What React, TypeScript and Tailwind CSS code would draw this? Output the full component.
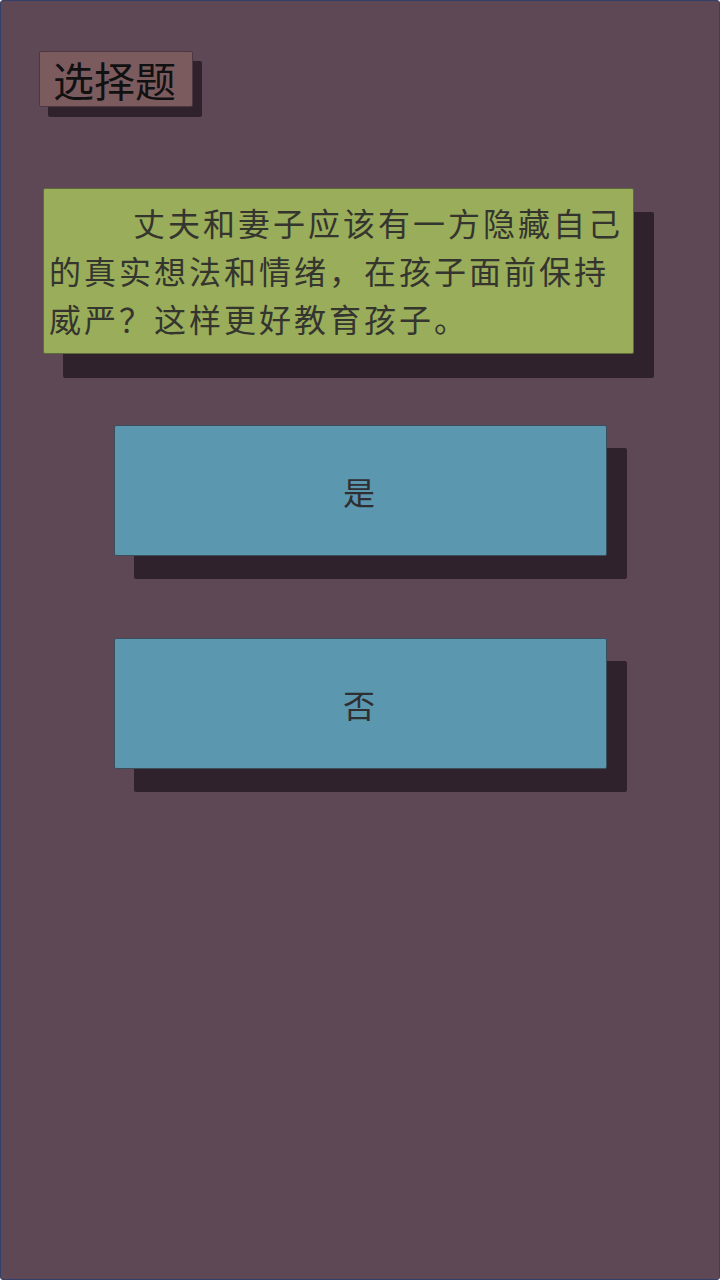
import React from "react";

const cjk = { fontFamily: '"Noto Sans CJK SC", "Noto Sans", sans-serif' };

function ChoiceButton({ label }: { label: string }) {
  return (
    <button
      className="ml-[113px] w-[493px] h-[131px] rounded-[2px] border border-[#3c4d5c] bg-[#5b97ae] shadow-[20px_23px_0_#30222c] text-[32px] text-[#2f2f33] flex items-center justify-center pr-[3px]"
      style={cjk}
    >
      {label}
    </button>
  );
}

export default function App() {
  return (
    <div className="w-[720px] h-[1280px] bg-[#5f4856] border border-[#34406a] rounded-[3px] overflow-hidden" style={cjk}>
      {/* heading tag */}
      <div className="pt-[50px] pl-[38px]">
        <div className="w-[154px] h-[56px] rounded-[2px] border border-[#4d3840] bg-[#7c5b5f] shadow-[9px_10px_0_#30222c] pl-[13px] flex items-center">
          <span className="text-[41px] leading-none text-[#111] tracking-[0px]">选择题</span>
        </div>
      </div>

      {/* question card */}
      <div className="mt-[81px] ml-[42px] w-[591px] h-[166px] rounded-[2px] border border-[#5d6a3a] bg-[#9aad5a] shadow-[20px_24px_0_#30222c] pl-[5px] pt-[9px]">
        <p className="text-[32px] leading-[48px] tracking-[3px] text-[#35352f] whitespace-nowrap">
          <span className="pl-[84px]">丈夫和妻子应该有一方隐藏自己</span>
          <br />
          的真实想法和情绪，在孩子面前保持
          <br />
          威严？这样更好教育孩子。
        </p>
      </div>

      <div className="mt-[71px]">
        <ChoiceButton label="是" />
      </div>
      <div className="mt-[82px]">
        <ChoiceButton label="否" />
      </div>
    </div>
  );
}
